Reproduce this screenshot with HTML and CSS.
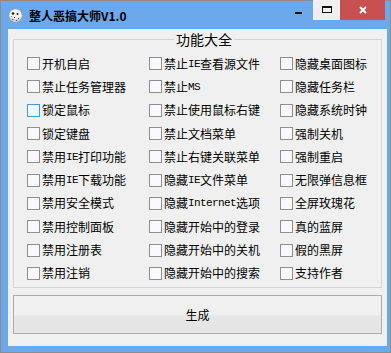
FILE: index.html
```html
<!DOCTYPE html>
<html>
<head>
    <title>整人恶搞大师V1.0</title>
    <link rel="stylesheet" href="styles.css">
</head>
<body>
    <div class="window">
        <!-- Title bar -->
        <div class="titlebar">
            <svg class="app-icon" width="15" height="15" viewBox="0 0 15 15">
                <circle cx="7.5" cy="7.5" r="6.8" fill="#f2f2f2" stroke="#9a9a9a" stroke-width="1"/>
                <path d="M2 9 Q7 14 13 9 Q12 13.5 7.5 14 Q3 13.5 2 9Z" fill="#c8c8c8"/>
                <circle cx="5" cy="5.5" r="1.3" fill="#222"/>
                <circle cx="9.5" cy="6" r="1" fill="#222"/>
                <rect x="6" y="9" width="1" height="1" fill="#333"/>
                <rect x="4" y="11" width="1" height="1" fill="#555"/>
                <rect x="8" y="12" width="1" height="1" fill="#555"/>
                <rect x="10" y="10" width="1" height="1" fill="#555"/>
                <rect x="3" y="8" width="1" height="1" fill="#777"/>
            </svg>
            <span class="title">整人恶搞大师V1.0</span>
            <div class="controls">
                <div class="ctl ctl-min"><span class="min-bar"></span></div>
                <div class="ctl ctl-max"><span class="max-box"></span></div>
                <div class="ctl ctl-close">
                    <svg width="8" height="8" viewBox="0 0 8 8">
                        <path d="M1 1 L7 7 M7 1 L1 7" stroke="#fff" stroke-width="1.8"/>
                    </svg>
                </div>
            </div>
        </div>

        <!-- Client area -->
        <div class="client">
            <fieldset class="group">
                <legend>功能大全</legend>
                <div class="options">
                    <label class="opt"><span class="box"></span>开机自启</label>
                    <label class="opt"><span class="box"></span>禁止<span class="en">IE</span>查看源文件</label>
                    <label class="opt"><span class="box"></span>隐藏桌面图标</label>

                    <label class="opt"><span class="box"></span>禁止任务管理器</label>
                    <label class="opt"><span class="box"></span>禁止<span class="en">MS</span></label>
                    <label class="opt"><span class="box"></span>隐藏任务栏</label>

                    <label class="opt"><span class="box box-hover"></span>锁定鼠标</label>
                    <label class="opt"><span class="box"></span>禁止使用鼠标右键</label>
                    <label class="opt"><span class="box"></span>隐藏系统时钟</label>

                    <label class="opt"><span class="box"></span>锁定键盘</label>
                    <label class="opt"><span class="box"></span>禁止文档菜单</label>
                    <label class="opt"><span class="box"></span>强制关机</label>

                    <label class="opt"><span class="box"></span>禁用<span class="en">IE</span>打印功能</label>
                    <label class="opt"><span class="box"></span>禁止右键关联菜单</label>
                    <label class="opt"><span class="box"></span>强制重启</label>

                    <label class="opt"><span class="box"></span>禁用<span class="en">IE</span>下载功能</label>
                    <label class="opt"><span class="box"></span>隐藏<span class="en">IE</span>文件菜单</label>
                    <label class="opt"><span class="box"></span>无限弹信息框</label>

                    <label class="opt"><span class="box"></span>禁用安全模式</label>
                    <label class="opt"><span class="box"></span>隐藏<span class="en">Internet</span>选项</label>
                    <label class="opt"><span class="box"></span>全屏玫瑰花</label>

                    <label class="opt"><span class="box"></span>禁用控制面板</label>
                    <label class="opt"><span class="box"></span>隐藏开始中的登录</label>
                    <label class="opt"><span class="box"></span>真的蓝屏</label>

                    <label class="opt"><span class="box"></span>禁用注册表</label>
                    <label class="opt"><span class="box"></span>隐藏开始中的关机</label>
                    <label class="opt"><span class="box"></span>假的黑屏</label>

                    <label class="opt"><span class="box"></span>禁用注销</label>
                    <label class="opt"><span class="box"></span>隐藏开始中的搜索</label>
                    <label class="opt"><span class="box"></span>支持作者</label>
                </div>
            </fieldset>
            <button class="make" type="button">生成</button>
        </div>
    </div>
</body>
</html>
```

FILE: styles.css
```css
/* Reset */
html, body {
    margin: 0;
    padding: 0;
}

body {
    font-family: "Noto Sans CJK SC", "Liberation Sans", sans-serif;
    font-size: 12px;
    color: #000;
    background-color: #fff;
}

/* Window frame */
.window {
    width: 391px;
    height: 353px;
    box-sizing: border-box;
    border: 1px solid #8c8c8c;
    background-color: #6ba8ec;
    padding: 0 3px 6px 7px;
    display: flex;
    flex-direction: column;
}

/* Title bar */
.titlebar {
    height: 28px;
    display: flex;
    align-items: center;
    flex-shrink: 0;
}

.app-icon {
    margin-top: 1px;
    flex-shrink: 0;
}

.title {
    margin-left: 6px;
    font-weight: bold;
    font-size: 12px;
    line-height: 16px;
    margin-top: 1px;
}

.controls {
    margin-left: auto;
    margin-right: 2px;
    align-self: flex-start;
    margin-top: -1px;
    display: flex;
}

.ctl {
    height: 20px;
    display: flex;
    align-items: center;
    justify-content: center;
}

.ctl-min {
    width: 26px;
}

.min-bar {
    display: block;
    width: 7px;
    height: 2px;
    background-color: #111;
    margin-top: 6px;
    margin-right: 4px;
}

.ctl-max {
    width: 27px;
    background-color: #f0f0f0;
}

.max-box {
    display: block;
    width: 8px;
    height: 4px;
    border: 1px solid #111;
    border-top-width: 2px;
    margin-top: -1px;
}

.ctl-close {
    width: 45px;
    background-color: #c75050;
}

/* Client area */
.client {
    flex: 1;
    background-color: #f0f0f0;
    padding: 2px 5px 0 5px;
}

.group {
    margin: 0;
    padding: 5px 0 2px 13px;
    border: 1px solid #d5d5d5;
}

.group legend {
    margin: 0 auto;
    padding: 0 2px;
    font-size: 14px;
    line-height: 16px;
}

.options {
    display: grid;
    grid-template-columns: 122px 131px 1fr;
    grid-auto-rows: 23.3px;
}

.opt {
    display: flex;
    align-items: center;
    white-space: nowrap;
    line-height: 14px;
}

.box {
    width: 11px;
    height: 11px;
    border: 1px solid #8f8f8f;
    background-color: #f8f8fd;
    margin-right: 2px;
    flex-shrink: 0;
}

.box-hover {
    border-color: #3c9af0;
    background-color: #f1f8ff;
}

.en {
    font-family: "Liberation Mono", monospace;
    font-size: 11px;
    letter-spacing: -0.6px;
}

/* Button */
.make {
    display: block;
    width: 100%;
    height: 39px;
    margin-top: 7px;
    border: 1px solid #acacac;
    background: linear-gradient(#f0f0f0 0%, #f0f0f0 50%, #e6e6e6 55%, #e5e5e5 100%);
    font-family: "Noto Sans CJK SC", sans-serif;
    font-size: 12px;
    color: #000;
    padding: 0;
}
```
